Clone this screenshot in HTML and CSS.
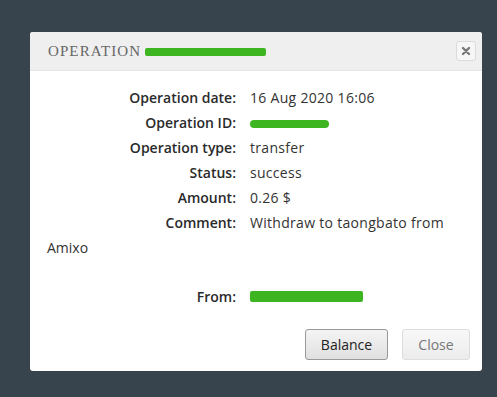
FILE: index.html
```html
<!DOCTYPE html>
<html>
<head>
<meta charset="utf-8">
<link rel="stylesheet" href="styles.css">
</head>
<body>
<div class="backdrop">
  <div class="modal">
    <div class="modal-header">
      <div class="title">OPERATION<span class="redact redact-title"></span></div>
      <div class="close-x">
        <svg width="10" height="10" viewBox="0 0 10 10"><path d="M2 2L8 8M8 2L2 8" stroke="#777" stroke-width="2.4" stroke-linecap="round"/></svg>
      </div>
    </div>
    <div class="modal-body">
      <div class="row"><div class="label">Operation date:</div><div class="value">16 Aug 2020 16:06</div></div>
      <div class="row"><div class="label">Operation ID:</div><div class="value"><span class="redact redact-id"></span></div></div>
      <div class="row"><div class="label">Operation type:</div><div class="value">transfer</div></div>
      <div class="row"><div class="label">Status:</div><div class="value">success</div></div>
      <div class="row"><div class="label">Amount:</div><div class="value">0.26 $</div></div>
      <div class="row"><div class="label">Comment:</div><div class="value">Withdraw to taongbato from</div></div>
      <div class="wrap">Amixo</div>
      <div class="row from"><div class="label">From:</div><div class="value"><span class="redact redact-from"></span></div></div>
    </div>
    <div class="modal-footer">
      <button class="btn btn-primary">Balance</button>
      <button class="btn btn-light">Close</button>
    </div>
  </div>
</div>
</body>
</html>
```
FILE: styles.css
```css
html, body { margin: 0; padding: 0; }
body {
  width: 497px; height: 397px; overflow: hidden;
  background: #37434d;
  font-family: "Open Sans", "DejaVu Sans", sans-serif;
}
.backdrop { padding: 32px 15px 0 30px; }
.modal {
  width: 452px; height: 339px;
  background: #fff;
  border-radius: 3px;
  display: flex; flex-direction: column;
}
.modal-header {
  height: 38px;
  background: #efefef;
  border-bottom: 1px solid #e4e4e4;
  border-radius: 3px 3px 0 0;
  display: flex; align-items: center; justify-content: space-between;
  padding: 0 6px 0 18px;
}
.title {
  font-family: "Liberation Serif", serif;
  font-size: 15px; letter-spacing: 1.1px;
  color: #666; display: flex; align-items: center;
}
.redact { display: inline-block; background: #3cb520; border-radius: 2px; }
.redact-title { width: 121px; height: 8px; margin-left: 4px; margin-top: 2px; }
.close-x {
  width: 18px; height: 18px;
  border: 1px solid #dcdcdc; border-radius: 3px;
  background: #f6f6f6;
  display: flex; align-items: center; justify-content: center;
}
.modal-body { padding: 14px 0 0 0; flex: 1; }
.row { display: flex; height: 25px; align-items: center; font-size: 14px; }
.label { width: 206px; text-align: right; font-weight: 600; color: #2a2a2a; }
.value { padding-left: 14px; color: #333; font-weight: 400; letter-spacing: 0.3px; }
.wrap { font-size: 14px; color: #333; height: 25px; line-height: 25px; padding-left: 17px; }
.row.from { margin-top: 24px; }
.redact-id { width: 79px; height: 8px; border-radius: 4px; vertical-align: middle; }
.redact-from { width: 113px; height: 11px; }
.modal-footer {
  display: flex; justify-content: flex-end; gap: 14px;
  padding: 0 12px 11px 0;
}
.btn {
  height: 31px; font-size: 14px;
  font-family: "Open Sans", "DejaVu Sans", sans-serif;
  border-radius: 3px; padding: 0;
}
.btn-primary { width: 83px; background: linear-gradient(#f4f4f4, #e0e0e0); border: 1px solid #999; color: #222; }
.btn-light { width: 68px; background: linear-gradient(#f8f8f8, #ececec); border: 1px solid #ddd; color: #777; }
```
